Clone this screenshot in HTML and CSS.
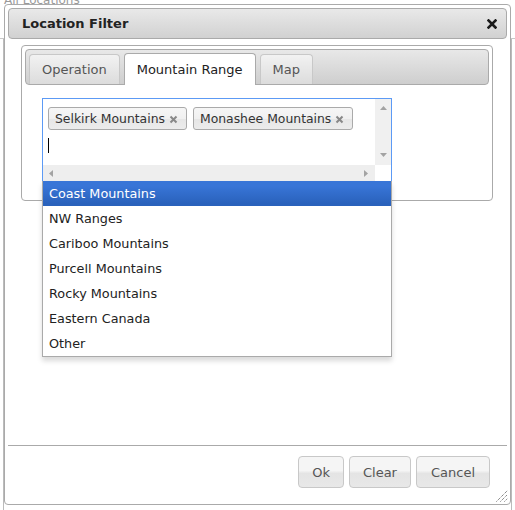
FILE: index.html
```html
<!DOCTYPE html>
<html>
<head>
<meta charset="utf-8">
<link rel="stylesheet" href="styles.css">
</head>
<body>
<div class="bg">
  <div class="bg-top"><span class="bg-title">All Locations</span></div>
  <div class="bg-table">
    <div class="bg-head"></div>
    <div class="bg-row plain"></div>
    <div class="bg-row alt"></div>
    <div class="bg-row"></div>
    <div class="bg-row"></div>
    <div class="bg-row"></div>
    <div class="bg-row"></div>
    <div class="bg-row"></div>
    <div class="bg-row"></div>
    <div class="bg-row"></div>
    <div class="bg-row last"></div>
    <div class="bg-gap"></div>
    <div class="bg-band"></div>
    <div class="bg-row"></div>
    <div class="bg-row"></div>
    <div class="bg-row"></div>
    <div class="bg-row"></div>
    <div class="bg-row"></div>
    <div class="bg-row"></div>
    <div class="bg-row"></div>
  </div>
</div>

<div class="dialog">
  <div class="titlebar">
    <span class="title">Location Filter</span>
    <span class="close" title="close">
      <svg width="10" height="10" viewBox="0 0 10 10"><path d="M1.5 1.5 L8.5 8.5 M8.5 1.5 L1.5 8.5" stroke="#1a1a1a" stroke-width="2.6" stroke-linecap="square"/></svg>
    </span>
  </div>
  <div class="content">
    <div class="tabs">
      <ul class="tab-nav">
        <li class="tab">Operation</li>
        <li class="tab active">Mountain Range</li>
        <li class="tab">Map</li>
      </ul>
      <div class="panel">
        <div class="select">
          <div class="select-main">
            <div class="tags">
              <span class="tag">Selkirk Mountains<svg class="x" width="9" height="9" viewBox="0 0 9 9"><path d="M1.5 1.5 L7.5 7.5 M7.5 1.5 L1.5 7.5" stroke="#888" stroke-width="2"/></svg></span>
              <span class="tag">Monashee Mountains<svg class="x" width="9" height="9" viewBox="0 0 9 9"><path d="M1.5 1.5 L7.5 7.5 M7.5 1.5 L1.5 7.5" stroke="#888" stroke-width="2"/></svg></span>
            </div>
            <div class="cursor"></div>
          </div>
          <div class="vscroll">
            <svg width="7" height="4" viewBox="0 0 7 4"><path d="M0 4 L3.5 0 L7 4 Z" fill="#a3a3a3"/></svg>
            <svg width="7" height="4" viewBox="0 0 7 4"><path d="M0 0 L3.5 4 L7 0 Z" fill="#a3a3a3"/></svg>
          </div>
          <div class="hscroll">
            <svg width="4" height="7" viewBox="0 0 4 7"><path d="M4 0 L0 3.5 L4 7 Z" fill="#a3a3a3"/></svg>
            <svg width="4" height="7" viewBox="0 0 4 7"><path d="M0 0 L4 3.5 L0 7 Z" fill="#a3a3a3"/></svg>
          </div>
          <div class="corner"></div>
          <ul class="dropdown">
            <li class="item hl">Coast Mountains</li>
            <li class="item">NW Ranges</li>
            <li class="item">Cariboo Mountains</li>
            <li class="item">Purcell Mountains</li>
            <li class="item">Rocky Mountains</li>
            <li class="item">Eastern Canada</li>
            <li class="item">Other</li>
          </ul>
        </div>
      </div>
    </div>
  </div>
  <div class="buttonpane">
    <button class="btn">Ok</button>
    <button class="btn">Clear</button>
    <button class="btn wide">Cancel</button>
  </div>
  <svg class="resize" width="12" height="12" viewBox="0 0 12 12">
    <path d="M0.5 11.5 L11.5 0.5 M4.5 11.5 L11.5 4.5 M8.5 11.5 L11.5 8.5" stroke="#555" stroke-width="1" stroke-dasharray="1 1"/>
  </svg>
</div>
</body>
</html>
```

FILE: styles.css
```css
* { box-sizing: border-box; }
html, body { margin: 0; padding: 0; }
body {
  width: 515px;
  height: 510px;
  overflow: hidden;
  position: relative;
  background: #fff;
  font-family: "DejaVu Sans", Verdana, sans-serif;
  font-size: 13px;
  color: #222;
}

/* background page */
.bg { width: 515px; }
.bg-top { height: 39px; border-bottom: 1px solid #c8c8c8; overflow: hidden; }
.bg-title { display: block; margin: -7px 0 0 4px; color: #999; font-size: 12px; line-height: 14px; }
.bg-table {
  margin-left: 3px;
  width: 509px;
  border-left: 1px solid #bbb;
  border-right: 1px solid #bbb;
}
.bg-head { height: 34px; background: #d9d9d9; border-bottom: 1px solid #bbb; }
.bg-row { height: 23px; border-bottom: 1px solid #d4d4d4; }
.bg-row.plain { height: 26px; border-bottom: 0; }
.bg-row.alt { height: 28px; background: #eceef3; }
.bg-row.last { border-bottom: 2px solid #aaa; }
.bg-gap { height: 11px; }
.bg-band { height: 28px; background: #e8e8e8; border-bottom: 1px solid #d4d4d4; }

/* dialog */
.dialog {
  position: absolute;
  left: 4px;
  top: 4px;
  width: 507px;
  height: 501px;
  border: 1px solid #aaa;
  border-radius: 4px;
  background: #fff;
  padding: 3px;
  display: flex;
  flex-direction: column;
}
.titlebar {
  height: 31px;
  flex: none;
  border: 1px solid #aaa;
  border-radius: 4px;
  background: linear-gradient(#e9e9e9, #d1d1d1);
  display: flex;
  align-items: center;
  justify-content: space-between;
  padding: 0 9px 0 13px;
}
.title { font-weight: bold; font-size: 13px; color: #222; }
.close { display: flex; width: 10px; height: 10px; }

.content { flex: 1; padding: 6px 14px 0 13px; }
.tabs {
  height: 156px;
  border: 1px solid #aaa;
  border-radius: 4px;
  padding: 3px;
}
.tab-nav {
  list-style: none;
  margin: 0;
  height: 36px;
  border: 1px solid #aaa;
  border-radius: 4px;
  background: linear-gradient(#e8e8e8, #cecece);
  padding: 4px 3px 0;
  display: flex;
  align-items: flex-end;
  gap: 4px;
}
.tab {
  height: 30px;
  padding: 7px 12px 0;
  line-height: 16px;
  border: 1px solid #c8c8c8;
  border-bottom: 0;
  border-radius: 4px 4px 0 0;
  background: linear-gradient(#f2f2f2, #dcdcdc);
  color: #555;
}
.tab.active {
  height: 32px;
  padding-top: 8px;
  margin-bottom: -1px;
  background: #fff;
  border-color: #aaa;
  color: #222;
}

.panel { padding: 13px 0 0 17px; }
.select {
  position: relative;
  width: 350px;
  height: 83px;
  border: 1px solid #5c9af5;
  border-bottom: 0;
  display: grid;
  grid-template-columns: 1fr 16px;
  grid-template-rows: 1fr 16px;
}
.select-main { padding: 8px 5px 0; overflow: hidden; }
.tags { display: flex; gap: 6px; }
.tag {
  height: 23px;
  border: 1px solid #aaa;
  border-radius: 3px;
  background: linear-gradient(#f6f6f6, #f0f0f0 50%, #e6e6e6 52%, #ececec);
  display: flex;
  align-items: center;
  gap: 4px;
  padding: 0 8px 0 6px;
  font-size: 12.4px;
  color: #333;
  white-space: nowrap;
}
.tag .x { margin-top: 2px; }
.cursor { width: 1px; height: 15px; background: #000; margin-top: 8px; }
.vscroll {
  background: #f0f0f0;
  display: flex;
  flex-direction: column;
  align-items: center;
  justify-content: space-between;
  padding: 7px 0 8px;
}
.hscroll {
  background: #eeeeee;
  display: flex;
  align-items: center;
  justify-content: space-between;
  padding: 0 7px 0 6px;
}
.corner { background: #fff; }

.dropdown {
  position: absolute;
  top: 100%;
  left: -1px;
  width: 350px;
  margin: 0;
  padding: 0;
  list-style: none;
  background: #fff;
  border: 1px solid #aaa;
  border-top: 0;
  box-shadow: 0 4px 5px rgba(0, 0, 0, 0.15);
  z-index: 5;
}
.item { height: 25px; line-height: 25px; padding: 0 6px; color: #222; font-size: 12.8px; }
.item.hl { background: linear-gradient(#3875d7 20%, #2a62bc 90%); color: #fff; }

.buttonpane {
  flex: none;
  height: 56px;
  border-top: 1px solid #aaa;
  padding: 10px 17px 0;
  display: flex;
  justify-content: flex-end;
  gap: 5px;
}
.btn {
  height: 32px;
  padding: 0 13px;
  border: 1px solid #c8c8c8;
  border-radius: 4px;
  background: linear-gradient(#f5f5f5 45%, #e4e4e4 55%, #e8e8e8);
  color: #555;
  font-family: "DejaVu Sans", Verdana, sans-serif;
  font-size: 13px;
}
.btn.wide { padding: 0 14px; }
.resize { position: absolute; right: 2px; bottom: 2px; }
```
